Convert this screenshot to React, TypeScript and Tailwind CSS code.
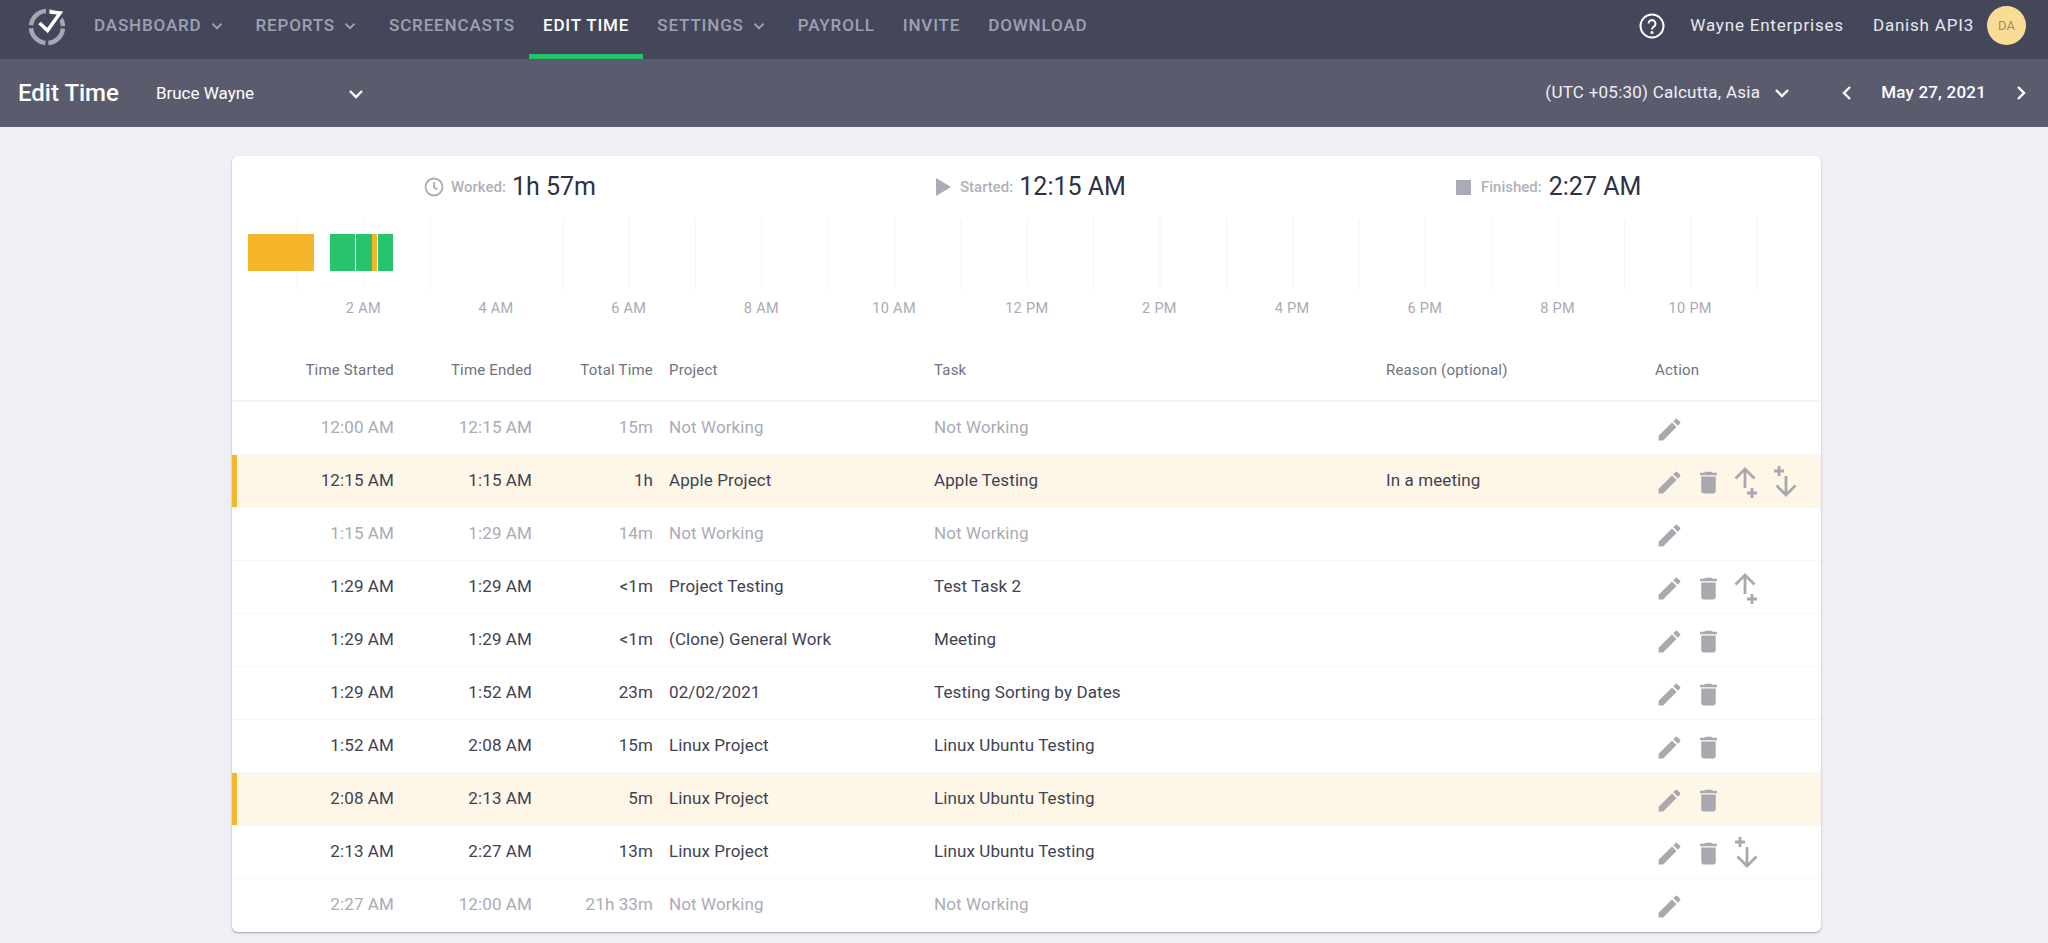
import React from "react";

const P = "M3 17.25V21h3.75L17.81 9.94l-3.75-3.75L3 17.25zM20.71 7.04a1 1 0 0 0 0-1.41l-2.34-2.34a1 1 0 0 0-1.41 0l-1.83 1.83 3.75 3.75 1.83-1.83z";
const D = "M6 19c0 1.1.9 2 2 2h8c1.1 0 2-.9 2-2V7H6v12zM19 4h-3.5l-1-1h-5l-1 1H5v2h14V4z";

function Chev({ d = "down", className = "" }: { d?: "down" | "left" | "right"; className?: string }) {
  const pts = d === "down" ? "5,8 11,14 17,8" : d === "left" ? "14,5 8,11 14,17" : "8,5 14,11 8,17";
  return (
    <svg width="22" height="22" viewBox="0 0 22 22" className={className} fill="none" stroke="currentColor" strokeWidth="2.400">
      <polyline points={pts} />
    </svg>
  );
}

function Logo() {
  return (
    <svg width="40" height="40" viewBox="0 0 40 40" fill="none">
      <circle cx="20" cy="21" r="16" stroke="#a5a7b4" strokeWidth="4.500" strokeDasharray="22 3.130" strokeDashoffset="-1.550" />
      <path d="M12 16l8.500 8.500L35 4" stroke="#44475a" strokeWidth="9" />
      <path d="M12.500 17l8 7.500L33 7l-10-1" stroke="#ffffff" strokeWidth="3.500" />
    </svg>
  );
}

function Pencil() {
  return (
    <span className="flex w-[39px] justify-center">
      <svg width="29" height="29" viewBox="0 0 24 24" fill="#a8a8ae"><path d={P} /></svg>
    </span>
  );
}
function Trash() {
  return (
    <span className="flex w-[39px] justify-center">
      <svg width="29" height="29" viewBox="0 0 24 24" fill="#a8a8ae"><path d={D} /></svg>
    </span>
  );
}
function Up() {
  return (
    <span className="flex w-[39px] justify-center">
      <svg width="30" height="32" viewBox="0 0 30 32" fill="none" stroke="#a8a8ae" strokeWidth="2.800">
        <path d="M12 3v19M2.500 12.500L12 3l9.500 9.500M19 22v10M14 27h10" />
      </svg>
    </span>
  );
}
function Down() {
  return (
    <span className="flex w-[39px] justify-center">
      <svg width="30" height="32" viewBox="0 0 30 32" fill="none" stroke="#a8a8ae" strokeWidth="2.800">
        <path d="M14 10v19M4.500 19.500L14 29l9.500-9.500M7 0v10M2 5h10" />
      </svg>
    </span>
  );
}

type Row = { s: string; e: string; t: string; p: string; k: string; r?: string; off?: boolean; warn?: boolean; a: string };
const rows: Row[] = [
  { s: "12:00 AM", e: "12:15 AM", t: "15m", p: "Not Working", k: "Not Working", off: true, a: "e" },
  { s: "12:15 AM", e: "1:15 AM", t: "1h", p: "Apple Project", k: "Apple Testing", r: "In a meeting", warn: true, a: "eduD" },
  { s: "1:15 AM", e: "1:29 AM", t: "14m", p: "Not Working", k: "Not Working", off: true, a: "e" },
  { s: "1:29 AM", e: "1:29 AM", t: "<1m", p: "Project Testing", k: "Test Task 2", a: "edu" },
  { s: "1:29 AM", e: "1:29 AM", t: "<1m", p: "(Clone) General Work", k: "Meeting", a: "ed" },
  { s: "1:29 AM", e: "1:52 AM", t: "23m", p: "02/02/2021", k: "Testing Sorting by Dates", a: "ed" },
  { s: "1:52 AM", e: "2:08 AM", t: "15m", p: "Linux Project", k: "Linux Ubuntu Testing", a: "ed" },
  { s: "2:08 AM", e: "2:13 AM", t: "5m", p: "Linux Project", k: "Linux Ubuntu Testing", warn: true, a: "ed" },
  { s: "2:13 AM", e: "2:27 AM", t: "13m", p: "Linux Project", k: "Linux Ubuntu Testing", a: "edD" },
  { s: "2:27 AM", e: "12:00 AM", t: "21h 33m", p: "Not Working", k: "Not Working", off: true, a: "e" },
];

const labels = ["2 AM", "4 AM", "6 AM", "8 AM", "10 AM", "12 PM", "2 PM", "4 PM", "6 PM", "8 PM", "10 PM"];
const nav: [string, boolean][] = [
  ["DASHBOARD", true],
  ["REPORTS", true],
  ["SCREENCASTS", false],
  ["EDIT TIME", false],
  ["SETTINGS", true],
  ["PAYROLL", false],
  ["INVITE", false],
  ["DOWNLOAD", false],
];
const grid = "grid grid-cols-[162px_138px_121px_281px_452px_264px_1fr] items-center";

export default function App() {
  return (
    <div className="min-h-[943px] bg-[#eff0f5] font-['Roboto',sans-serif] text-[#3f4252]">
      <header className="flex h-[59px] items-center bg-[#44475a] pl-[27px] pr-[22px]">
        <div className="pb-[8px]">
          <Logo />
        </div>
        <nav className="ml-[13px] flex h-full">
          {nav.map(([n, c]) => (
            <div
              key={n}
              className={
                n === "EDIT TIME"
                  ? "flex h-full items-center border-b-[5px] border-[#22c36b] px-[14px] pb-[3px] text-[17px] font-medium tracking-[0.85px] text-white"
                  : "flex h-full items-center px-[14px] pb-[8px] text-[17px] font-medium tracking-[0.85px] text-[#9ea0b0]"
              }
            >
              {n}
              {c && <Chev className="ml-[4px] scale-75" />}
            </div>
          ))}
        </nav>
        <div className="ml-auto flex items-center pb-[8px] text-[17px] tracking-[0.8px] text-[#e8e8ee]">
          <svg width="26" height="26" viewBox="0 0 26 26" fill="none" stroke="#fff" strokeWidth="2">
            <circle cx="13" cy="13" r="11.500" />
            <path d="M9.500 10.500a3.500 3.500 0 1 1 5.500 3c-1.300.9-2 1.500-2 3" />
            <circle cx="13" cy="19.500" r="0.600" fill="#fff" />
          </svg>
          <span className="ml-[25px]">Wayne Enterprises</span>
          <span className="ml-[29px]">Danish API3</span>
          <span className="ml-[13px] flex h-[39px] w-[39px] items-center justify-center rounded-full bg-[#fbdc96] text-[13px] tracking-normal text-[#a18b5e]">
            DA
          </span>
        </div>
      </header>
      <div className="flex h-[68px] items-center bg-[#5a5c6e] pl-[18px] pr-[16px] text-white">
        <h1 className="text-[24px] font-medium">Edit Time</h1>
        <span className="ml-[37px] pt-[1px] text-[17px]">Bruce Wayne</span>
        <Chev className="ml-[91px] mt-[1px]" />
        <span className="ml-auto text-[17px] tracking-[0.25px] text-[#f0f0f4]">(UTC +05:30) Calcutta, Asia</span>
        <Chev className="ml-[11px]" />
        <Chev d="left" className="ml-[43px]" />
        <span className="ml-[23px] text-[17px] font-medium tracking-[0.2px]">May 27, 2021</span>
        <Chev d="right" className="ml-[24px]" />
      </div>

      <main className="mx-[232px] mt-[29px] w-[1589px] rounded-[6px] bg-white shadow-[0_1px_2px_rgba(60,60,70,0.45)]">
        <div className="flex h-[62px] items-center pl-[192px]">
          <div className="flex w-[511px] items-center">
            <svg width="20" height="20" viewBox="0 0 20 20" fill="none" stroke="#a9abb5" strokeWidth="1.800">
              <circle cx="10" cy="10" r="8.500" />
              <path d="M10 5v5.500l3.500 2" />
            </svg>
            <span className="ml-[7px] text-[15px] font-medium text-[#b0b1ba]">Worked:</span>
            <span className="ml-[6px] text-[25px] text-[#2e3145]">1h 57m</span>
          </div>
          <div className="flex w-[521px] items-center">
            <svg width="16" height="18" viewBox="0 0 16 18" fill="#a9abb5"><path d="M1 0l15 9-15 9z" /></svg>
            <span className="ml-[9px] text-[15px] font-medium text-[#b0b1ba]">Started:</span>
            <span className="ml-[6px] text-[25px] text-[#2e3145]">12:15 AM</span>
          </div>
          <div className="flex items-center">
            <svg width="15" height="15" viewBox="0 0 15 15" fill="#a9abb5"><rect width="15" height="15" /></svg>
            <span className="ml-[10px] text-[15px] font-medium text-[#b0b1ba]">Finished:</span>
            <span className="ml-[7px] text-[25px] text-[#2e3145]">2:27 AM</span>
          </div>
        </div>

        <svg width="1589" height="72" viewBox="0 0 1589 72" className="-mt-[1px] block">
          {Array.from({ length: 23 }).map((_, i) =>
            i === 3 ? null : <rect key={i} x={65 + i * 66.35} y={i % 2 ? 0 : 2} width="1" height="70" fill="#f3f3f6" />
          )}
          <rect x="16" y="17" width="66" height="37" fill="#f6b62c" />
          <rect x="98" y="17" width="25" height="37" fill="#26c46e" />
          <rect x="124" y="17" width="16" height="37" fill="#26c46e" />
          <rect x="140" y="17" width="5" height="37" fill="#f6b62c" />
          <rect x="146" y="17" width="15" height="37" fill="#26c46e" />
        </svg>
        <div className="ml-[65px] mt-[10px] flex h-[20px] items-center">
          {labels.map((l) => (
            <span key={l} className="w-[132.700px] shrink-0 text-center text-[14.500px] tracking-[0.3px] text-[#a9abb5]">
              {l}
            </span>
          ))}
        </div>

        <div className={`${grid} mt-[38px] h-[45px] items-start border-b-2 border-[#f3f3f5] text-[15px] tracking-[0.2px] text-[#6f7280]`}>
          <span className="pt-[2px] text-right">Time Started</span>
          <span className="pt-[2px] text-right">Time Ended</span>
          <span className="pt-[2px] text-right">Total Time</span>
          <span className="pl-4 pt-[2px]">Project</span>
          <span className="pt-[2px]">Task</span>
          <span className="pt-[2px]">Reason (optional)</span>
          <span className="pl-[5px] pt-[2px]">Action</span>
        </div>

        {rows.map((r, i) => (
          <div
            key={i}
            className={`${grid} h-[53px] border-b text-[17px] tracking-[0.1px] ${r.off ? "text-[#a9abb5]" : "text-[#3f4252]"} ${
              r.warn ? "border-transparent bg-[#fef7e8] shadow-[inset_5px_0_0_#f6b62c]" : i < 9 ? "border-[#f7f7f9]" : "border-transparent"
            }`}
          >
            <span className="text-right">{r.s}</span>
            <span className="text-right">{r.e}</span>
            <span className="text-right">{r.t}</span>
            <span className="pl-4">{r.p}</span>
            <span>{r.k}</span>
            <span>{r.r}</span>
            <span className="flex items-center pt-[2px]">
              {r.a.split("").map((c, j) =>
                c === "e" ? <Pencil key={j} /> : c === "d" ? <Trash key={j} /> : c === "u" ? <Up key={j} /> : <Down key={j} />
              )}
            </span>
          </div>
        ))}
      </main>
    </div>
  );
}
